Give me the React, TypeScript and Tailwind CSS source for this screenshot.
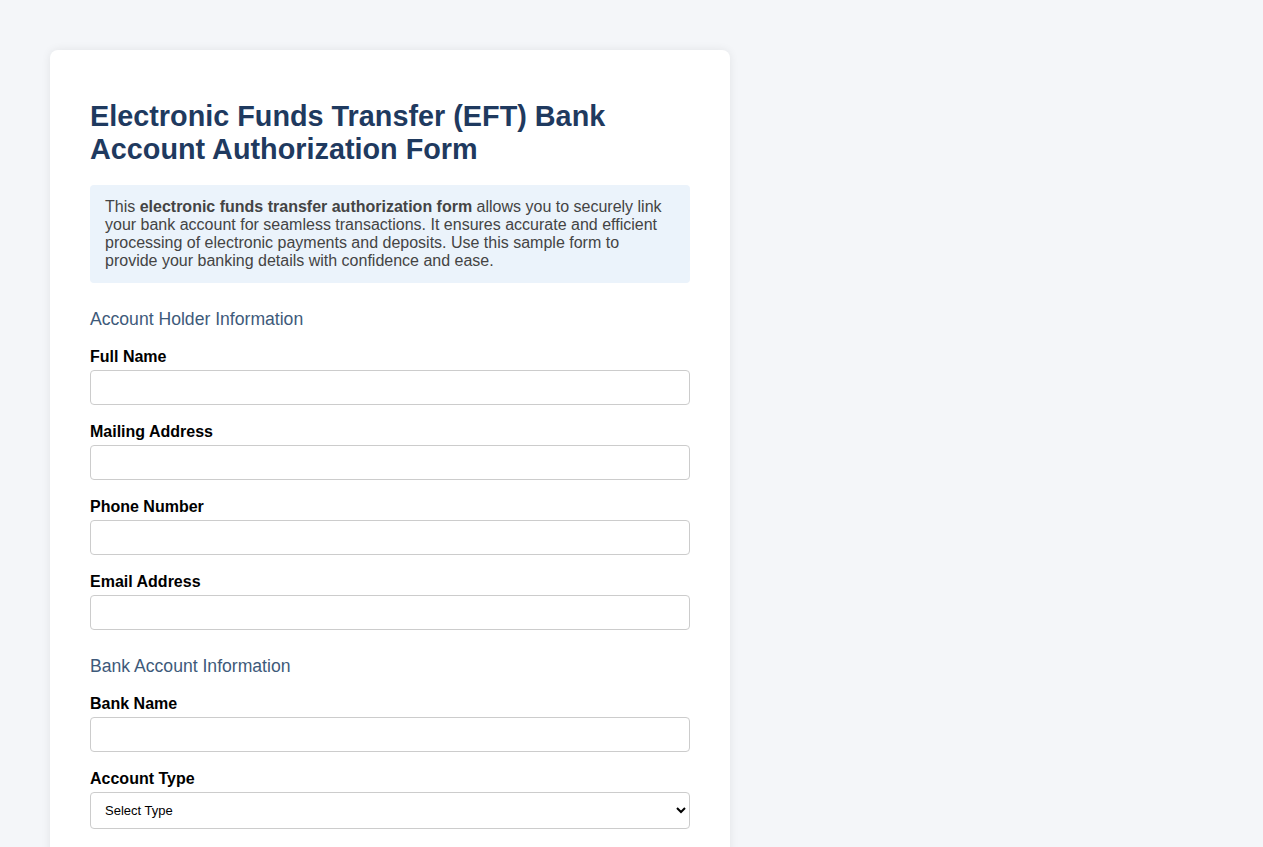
import React from 'react'

const Field: React.FC<{ label: string; type?: string }> = ({ label, type = 'text' }) => (
  <div className="mb-[18px]">
    <label className="block mb-[4px] text-[16px] font-bold leading-[18px] text-black">{label}</label>
    <input
      type={type}
      className="block w-full h-[35px] px-2 border border-[#ccc] rounded-[4px] bg-white text-[16px] outline-none"
    />
  </div>
)

const App: React.FC = () => {
  return (
    <div className="min-h-screen bg-[#f4f6f9] pt-[50px] pl-[50px] font-['Liberation_Sans',Arial,sans-serif]">
      <div className="w-[680px] bg-white rounded-[8px] shadow-[0_0_10px_rgba(0,0,0,0.08)] px-[40px] pt-[40px] pb-[40px]">
        <h1 className="mt-[10px] mb-[19px] text-[28.8px] font-bold leading-[33px] text-[#1f3a5f]">
          Electronic Funds Transfer (EFT) Bank Account Authorization Form
        </h1>
        <div className="bg-[#ebf3fb] rounded-[4px] px-[15px] py-[13px] text-[16px] leading-[18px] text-[#444]">
          This <strong>electronic funds transfer authorization form</strong> allows you to securely link your bank
          account for seamless transactions. It ensures accurate and efficient processing of electronic payments and
          deposits. Use this sample form to provide your banking details with confidence and ease.
        </div>

        <h2 className="mt-[26px] mb-[18px] text-[17.6px] leading-[21px] text-[#3e5a7a]">Account Holder Information</h2>
        <Field label="Full Name" />
        <Field label="Mailing Address" />
        <Field label="Phone Number" type="tel" />
        <Field label="Email Address" type="email" />

        <h2 className="mt-[26px] mb-[18px] text-[17.6px] leading-[21px] text-[#3e5a7a]">Bank Account Information</h2>
        <Field label="Bank Name" />
        <div className="mb-[18px]">
          <label className="block mb-[4px] text-[16px] font-bold leading-[18px] text-black">Account Type</label>
          <select className="block w-full h-[37px] px-[10px] border border-[#ccc] rounded-[4px] bg-white text-[13px] text-black">
            <option>Select Type</option>
            <option>Checking</option>
            <option>Savings</option>
          </select>
        </div>
        <Field label="Routing Number" />
        <Field label="Account Number" />
      </div>
    </div>
  )
}

export default App
